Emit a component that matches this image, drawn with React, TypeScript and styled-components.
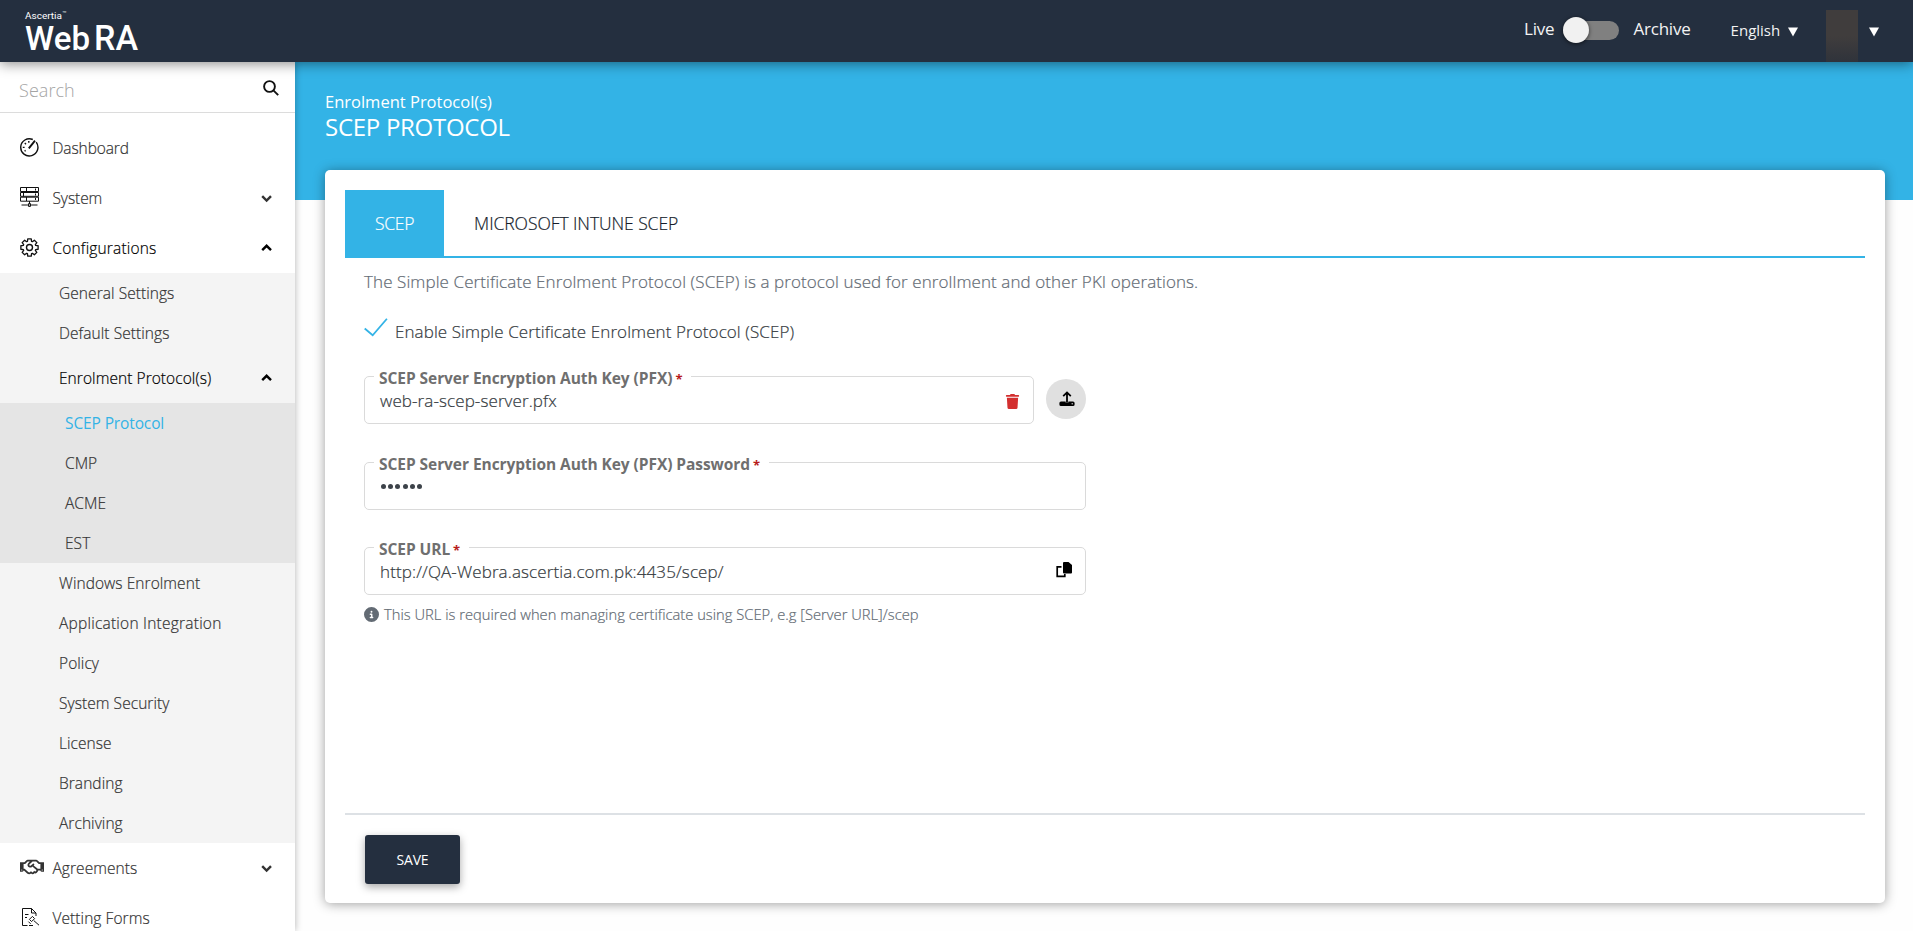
import React from "react";
import styled, { createGlobalStyle } from "styled-components";
import { FaCircleInfo } from "react-icons/fa6";
import { FaTrash, FaRegHandshake } from "react-icons/fa";

const Global = createGlobalStyle`
  * { box-sizing: border-box; }
  body { margin: 0; background: #fefefe; overflow: hidden; font-family: "Open Sans", "Noto Sans", sans-serif; font-weight: 300; }
`;

const Page = styled.div`
  height: 931px;
  display: flex;
  flex-direction: column;
  overflow: hidden;
`;

const Header = styled.header`
  flex: 0 0 62px;
  display: flex;
  align-items: flex-start;
  justify-content: space-between;
  background: #242f3f;
  color: #f3f3f3;
  box-shadow: 0 2px 12px rgba(0, 0, 0, 0.45);
  z-index: 3;
`;
const Logo = styled.svg`
  width: 160px;
  height: 62px;
  fill: #fff;
  font-family: Roboto, sans-serif;
`;
const HeaderTools = styled.div`
  display: flex;
  height: 62px;
  width: 389px;
  font-weight: 400;
`;
const ModeLabel = styled.span<{ $gap: number }>`
  font-size: 17px;
  line-height: 24px;
  letter-spacing: -0.2px;
  margin-top: 17px;
  margin-right: ${(p) => p.$gap}px;
`;
const Switch = styled.div`
  width: 56px;
  height: 19px;
  margin: 21px 14px 0 0;
  border-radius: 10px;
  background: #808080;
  display: flex;
  align-items: center;
`;
const Knob = styled.div`
  flex: none;
  width: 26px;
  height: 26px;
  margin-top: -1px;
  border-radius: 50%;
  background: #f1f1f1;
  box-shadow: 0 1px 4px rgba(0, 0, 0, 0.6);
`;
const Language = styled.div`
  width: 67px;
  display: flex;
  align-items: flex-start;
  justify-content: space-between;
  margin-top: 18px;
  font-size: 15px;
  line-height: 24px;
  margin-right: 28px;
`;
const Avatar = styled.div`
  width: 32px;
  height: 52px;
  margin: 10px 11px 0 0;
  background: linear-gradient(#403d3d 50%, #2f333b);
`;
const Caret = styled.svg<{ $top: number }>`
  width: 10px;
  height: 10px;
  margin-top: ${(p) => p.$top}px;
  fill: #fff;
`;

const Body = styled.div`
  flex: 1;
  display: flex;
  min-height: 0;
`;

const Sidebar = styled.aside`
  flex: 0 0 295px;
  background: #fff;
  box-shadow: 0 0 7px rgba(0, 0, 0, 0.3);
  z-index: 2;
  overflow: hidden;
  color: #333;
  font-size: 15.5px;
  letter-spacing: 0.06px;
  -webkit-text-stroke: 0.2px;
`;
const SearchRow = styled.div`
  height: 51px;
  display: flex;
  align-items: center;
  justify-content: space-between;
  padding: 5px 16px 0 19px;
  border-bottom: 1px solid #dcdcdc;
  margin-bottom: 10px;
  font-size: 18px;
  color: #a4a4a4;
  -webkit-text-stroke: 0;
`;
const SearchIcon = styled.svg`
  width: 16px;
  height: 16px;
  margin-top: -3px;
  fill: none;
  stroke: #111;
  stroke-width: 1.9;
`;
const MenuItem = styled.div<{ $open?: boolean }>`
  height: 50px;
  display: flex;
  align-items: center;
  padding: 0 22px 0 20px;
  color: ${(p) => (p.$open ? "#000" : "#333")};
`;
const IconSlot = styled.span`
  width: 32.5px;
  height: 24px;
  display: flex;
  align-items: center;
  margin-top: -2px;
`;
const MenuText = styled.span<{ $track?: number }>`
  flex: 1;
  letter-spacing: ${(p) => p.$track ?? 0.06}px;
`;
const Submenu = styled.div`
  background: #f4f4f4;
`;
const SubItem = styled.div<{ $tall?: boolean }>`
  height: ${(p) => (p.$tall ? 50 : 40)}px;
  padding: 0 22px 0 59px;
  display: flex;
  align-items: center;
  color: ${(p) => (p.$tall ? "#000" : "#333")};
`;
const Nested = styled.div`
  background: #e5e5e5;
`;
const NestedItem = styled.div<{ $active?: boolean }>`
  height: 40px;
  display: flex;
  align-items: center;
  padding-left: 65px;
  font-weight: ${(p) => (p.$active ? 400 : 300)};
  -webkit-text-stroke: ${(p) => (p.$active ? 0 : 0.2)}px;
  letter-spacing: ${(p) => (p.$active ? -0.12 : 0.06)}px;
  color: ${(p) => (p.$active ? "#33b3e6" : "#333")};
`;
const ChevronSvg = styled.svg`
  width: 12px;
  height: 12px;
  fill: none;
  stroke: currentColor;
  stroke-width: 2.4;
`;
const LineIcon = styled.svg`
  fill: none;
  stroke: #111;
  stroke-width: 1.2;
`;

const Main = styled.main`
  flex: 1;
  min-width: 0;
`;
const Banner = styled.div`
  height: 138px;
  background: #33b3e6;
  color: #fff;
  padding: 27.5px 0 0 30px;
  font-weight: 400;
`;
const Crumb = styled.div`
  font-size: 16.5px;
  line-height: 24px;
  letter-spacing: 0;
`;
const Title = styled.h1`
  margin: 0;
  font-size: 24px;
  line-height: 25px;
  font-weight: 400;
  letter-spacing: -0.28px;
`;
const Card = styled.section`
  width: 1560px;
  height: 733px;
  margin: -30px 0 0 30px;
  padding: 20px 20px 0;
  background: #fff;
  border-radius: 5px;
  box-shadow: 0 1px 12px rgba(0, 0, 0, 0.38);
  display: flex;
  flex-direction: column;
  -webkit-text-stroke: 0.2px;
`;
const Tabs = styled.div`
  height: 68px;
  display: flex;
  border-bottom: 2px solid #33b3e6;
`;
const Tab = styled.div<{ $active?: boolean }>`
  padding: 0 30px;
  line-height: 67px;
  font-size: 17.5px;
  letter-spacing: ${(p) => (p.$active ? -0.3 : -0.07)}px;
  color: ${(p) => (p.$active ? "#fff" : "#141c2b")};
  background: ${(p) => (p.$active ? "#33b3e6" : "transparent")};
`;
const Content = styled.div`
  flex: 1;
  padding: 0 19px;
  font-size: 17px;
  color: #343a40;
`;
const Intro = styled.p`
  margin: 11px 0 0;
  line-height: 26px;
  letter-spacing: 0.088px;
  color: #636b74;
`;
const CheckRow = styled.div`
  display: flex;
  align-items: center;
  height: 30px;
  margin: 21px 0 30px;
  letter-spacing: 0.088px;
`;
const Check = styled.svg`
  width: 24px;
  height: 19px;
  margin: -8px 7px 0 0;
  fill: none;
  stroke: #33b3e6;
  stroke-width: 1.9;
`;
const FieldRow = styled.div<{ $gap: number }>`
  display: flex;
  align-items: flex-start;
  width: 722px;
  height: 48px;
  margin-bottom: ${(p) => p.$gap}px;
`;
const Field = styled.fieldset`
  flex: 1;
  position: relative;
  height: 48px;
  margin: 0;
  padding: 13px 13px 0 15px;
  border: 1px solid #dadada;
  border-radius: 5px;
  display: flex;
  align-items: flex-start;
  justify-content: space-between;
`;
const Label = styled.label`
  position: absolute;
  left: 9px;
  top: -12px;
  height: 22px;
  padding: 0 9px 0 5px;
  background: #fff;
  line-height: 26px;
  font-size: 15.5px;
  font-weight: 700;
  letter-spacing: -0.06px;
  -webkit-text-stroke: 0;
  color: #6f6f6f;
  white-space: nowrap;
`;
const Star = styled.span`
  color: #b71c1c;
  font-size: 13px;
  margin-left: 3px;
`;
const Value = styled.span<{ $track: number }>`
  line-height: 22px;
  letter-spacing: ${(p) => p.$track}px;
`;
const Password = styled.span`
  display: flex;
  gap: 2.2px;
  padding: 8px 0 0 1px;
`;
const Dot = styled.i`
  width: 5px;
  height: 5px;
  border-radius: 50%;
  background: #3d434a;
`;
const FieldIcon = styled.span<{ $top: number }>`
  display: flex;
  margin-top: ${(p) => p.$top}px;
`;
const RoundButton = styled.button`
  width: 40px;
  height: 40px;
  margin: 3px 0 0 12px;
  padding: 0 0 1px 1px;
  border: 0;
  border-radius: 50%;
  background: #e0e0e0;
  display: grid;
  place-items: center;
`;
const Hint = styled.div`
  display: flex;
  align-items: center;
  gap: 5px;
  height: 24px;
  margin-top: -30px;
  font-size: 14.7px;
  letter-spacing: 0.02px;
  color: #636b74;
`;
const Footer = styled.footer`
  height: 90px;
  border-top: 2px solid #dde1e5;
  padding: 20px;
`;
const Save = styled.button`
  width: 95px;
  height: 49px;
  border: 0;
  border-radius: 3px;
  background: #242f3f;
  color: #fff;
  font: 400 14px "Open Sans", sans-serif;
  letter-spacing: -0.2px;
  -webkit-text-stroke: 0;
  box-shadow: 0 3px 8px rgba(0, 0, 0, 0.35);
`;

const Chevron = ({ up }: { up?: boolean }) => (
  <ChevronSvg viewBox="0 0 12 12">
    <path d={up ? "M1.2 8.2L5.6 3.8l4.4 4.4" : "M1.2 4.2L5.6 8.6l4.4-4.4"} />
  </ChevronSvg>
);

const DownCaret = ({ top }: { top: number }) => (
  <Caret $top={top} viewBox="0 0 10 10"><path d="M0 0.5h10L5 9.5z" /></Caret>
);

const DashboardIcon = () => (
  <LineIcon width="19" height="19" viewBox="0 0 19 19">
    <path d="M16.2 4.2A8.6 8.6 0 1 1 12.8 1.5" strokeWidth="1.4" />
    <path d="M15 2.6L8.8 10.3" strokeWidth="1.9" />
    <path d="M8.8 3v1.8M4.8 5l1.2 1.2M2.8 9.4h1.8M4.6 13.2l1-.8" strokeWidth="1.4" />
  </LineIcon>
);
const ServerIcon = () => (
  <LineIcon width="19" height="20" viewBox="0 0 19 20" strokeWidth="1">
    <path d="M.5 .5h18v4H.5zM.5 5.5h18v3.8H.5zM.5 10.2h18v4H.5z" strokeWidth="1" />
    <path d="M6.5 .5v4M6.5 10v4M3.5 5.5v4M15.5 1.5v2M15.5 6.5v2M15.5 11v2M9.5 14v3M1.5 18h6M11.5 18h6" strokeWidth="1" />
    <circle cx="9.5" cy="18" r="1.3" strokeWidth="1.3" />
  </LineIcon>
);
const gear = Array.from({ length: 8 }, (_, i) => {
  const a = (i * Math.PI) / 4;
  const p = (r: number, d: number) => `${(9.5 + r * Math.sin(a + d)).toFixed(2)} ${(9.5 - r * Math.cos(a + d)).toFixed(2)}`;
  return `${i ? "L" : "M"}${p(6.5, -0.32)}L${p(8.8, -0.2)}L${p(8.8, 0.2)}L${p(6.5, 0.32)}`;
}).join("") + "z";
const GearIcon = () => (
  <LineIcon width="19" height="19" viewBox="0 0 19 19" strokeLinejoin="round">
    <path d={gear} strokeWidth="1.3" />
    <circle cx="9.5" cy="9.5" r="3" strokeWidth="1.4" />
  </LineIcon>
);
const FormIcon = () => (
  <LineIcon width="22" height="20" viewBox="0 0 22 20">
    <path d="M7.5 18.5h-5v-17h9l4.5 4.5v3M11.5 1.5v4.5H16M5 7.5h3.5M5 10.5h2M9 18.5h4" strokeWidth="1" />
    <path d="M9.4 12.4l3-3 2.2 2.2-3 3zM8.4 14.6l2.2 2.2M13.8 13.6l5.2 4.6" strokeWidth="1" />
  </LineIcon>
);
const CopyIcon = () => (
  <svg width="16" height="16" viewBox="0 0 16 16">
    <path d="M5.5 4.9H1.2v9.4h7.6V12" fill="none" stroke="#000" strokeWidth="1.7" />
    <path d="M8 0h4.5L16 3v7.5a1 1 0 0 1-1 1H8a1 1 0 0 1-1-1V1a1 1 0 0 1 1-1z" />
  </svg>
);

export default function App() {
  return (
    <Page>
      <Global />
      <Header>
        <Logo viewBox="0 0 160 62">
          <text x="25" y="18.5" fontSize="9.5" fontWeight="400" textLength="37" lengthAdjust="spacingAndGlyphs">Ascertia</text>
          <text x="62" y="16" fontSize="7">™</text>
          <text x="25" y="50" fontSize="34" fontWeight="500" textLength="65" lengthAdjust="spacingAndGlyphs">Web</text>
          <text x="94" y="50" fontSize="35" fontWeight="500" textLength="44" lengthAdjust="spacingAndGlyphs">RA</text>
        </Logo>
        <HeaderTools>
          <ModeLabel $gap={9}>Live</ModeLabel>
          <Switch><Knob /></Switch>
          <ModeLabel $gap={40}>Archive</ModeLabel>
          <Language>English<DownCaret top={9} /></Language>
          <Avatar />
          <DownCaret top={27} />
        </HeaderTools>
      </Header>
      <Body>
        <Sidebar>
          <SearchRow>
            Search
            <SearchIcon viewBox="0 0 16 16"><circle cx="6.5" cy="6.5" r="5.4" /><path d="M10.4 10.4l4.8 4.8" /></SearchIcon>
          </SearchRow>
          <MenuItem><IconSlot><DashboardIcon /></IconSlot><MenuText $track={-0.1}>Dashboard</MenuText></MenuItem>
          <MenuItem><IconSlot><ServerIcon /></IconSlot><MenuText $track={-0.08}>System</MenuText><Chevron /></MenuItem>
          <MenuItem $open><IconSlot><GearIcon /></IconSlot><MenuText $track={0.16}>Configurations</MenuText><Chevron up /></MenuItem>
          <Submenu>
            <SubItem>General Settings</SubItem>
            <SubItem>Default Settings</SubItem>
            <SubItem $tall><MenuText>Enrolment Protocol(s)</MenuText><Chevron up /></SubItem>
            <Nested>
              <NestedItem $active>SCEP Protocol</NestedItem>
              <NestedItem>CMP</NestedItem>
              <NestedItem>ACME</NestedItem>
              <NestedItem>EST</NestedItem>
            </Nested>
            <SubItem>Windows Enrolment</SubItem>
            <SubItem><MenuText $track={0.23}>Application Integration</MenuText></SubItem>
            <SubItem>Policy</SubItem>
            <SubItem>System Security</SubItem>
            <SubItem>License</SubItem>
            <SubItem>Branding</SubItem>
            <SubItem>Archiving</SubItem>
          </Submenu>
          <MenuItem><IconSlot><FaRegHandshake size={24} /></IconSlot><MenuText>Agreements</MenuText><Chevron /></MenuItem>
          <MenuItem><IconSlot><FormIcon /></IconSlot><MenuText>Vetting Forms</MenuText></MenuItem>
        </Sidebar>
        <Main>
          <Banner>
            <Crumb>Enrolment Protocol(s)</Crumb>
            <Title>SCEP PROTOCOL</Title>
          </Banner>
          <Card>
            <Tabs>
              <Tab $active>SCEP</Tab>
              <Tab>MICROSOFT INTUNE SCEP</Tab>
            </Tabs>
            <Content>
              <Intro>The Simple Certificate Enrolment Protocol (SCEP) is a protocol used for enrollment and other PKI operations.</Intro>
              <CheckRow>
                <Check viewBox="0 0 25 20"><path d="M.6 11l8.4 7.2L24 .8" /></Check>
                Enable Simple Certificate Enrolment Protocol (SCEP)
              </CheckRow>
              <FieldRow $gap={38}>
                <Field>
                  <Label>SCEP Server Encryption Auth Key (PFX)<Star>*</Star></Label>
                  <Value $track={0.1}>web-ra-scep-server.pfx</Value>
                  <FieldIcon $top={4}><FaTrash size={15} color="#d32f2f" /></FieldIcon>
                </Field>
                <RoundButton>
                  <svg width="16" height="16" viewBox="0 0 16 16">
                    <path d="M8 11.5V2M4.2 5.2L8 1.4l3.8 3.8" fill="none" stroke="#000" strokeWidth="1.8" />
                    <path d="M2 10.5h4.6v1h2.8v-1H14a1.6 1.6 0 0 1 1.6 1.6v1.3A1.6 1.6 0 0 1 14 15H2a1.6 1.6 0 0 1-1.6-1.6v-1.3A1.6 1.6 0 0 1 2 10.5z" />
                    <circle cx="13.2" cy="12.8" r=".7" fill="#ddd" />
                  </svg>
                </RoundButton>
              </FieldRow>
              <FieldRow $gap={37}>
                <Field>
                  <Label>SCEP Server Encryption Auth Key (PFX) Password<Star>*</Star></Label>
                  <Password>{[0, 1, 2, 3, 4, 5].map((n) => <Dot key={n} />)}</Password>
                </Field>
              </FieldRow>
              <FieldRow $gap={37}>
                <Field>
                  <Label>SCEP URL<Star>*</Star></Label>
                  <Value $track={0.11}>http://QA-Webra.ascertia.com.pk:4435/scep/</Value>
                  <FieldIcon $top={1}><CopyIcon /></FieldIcon>
                </Field>
              </FieldRow>
              <Hint><FaCircleInfo size={15} />This URL is required when managing certificate using SCEP, e.g [Server URL]/scep</Hint>
            </Content>
            <Footer><Save>SAVE</Save></Footer>
          </Card>
        </Main>
      </Body>
    </Page>
  );
}
